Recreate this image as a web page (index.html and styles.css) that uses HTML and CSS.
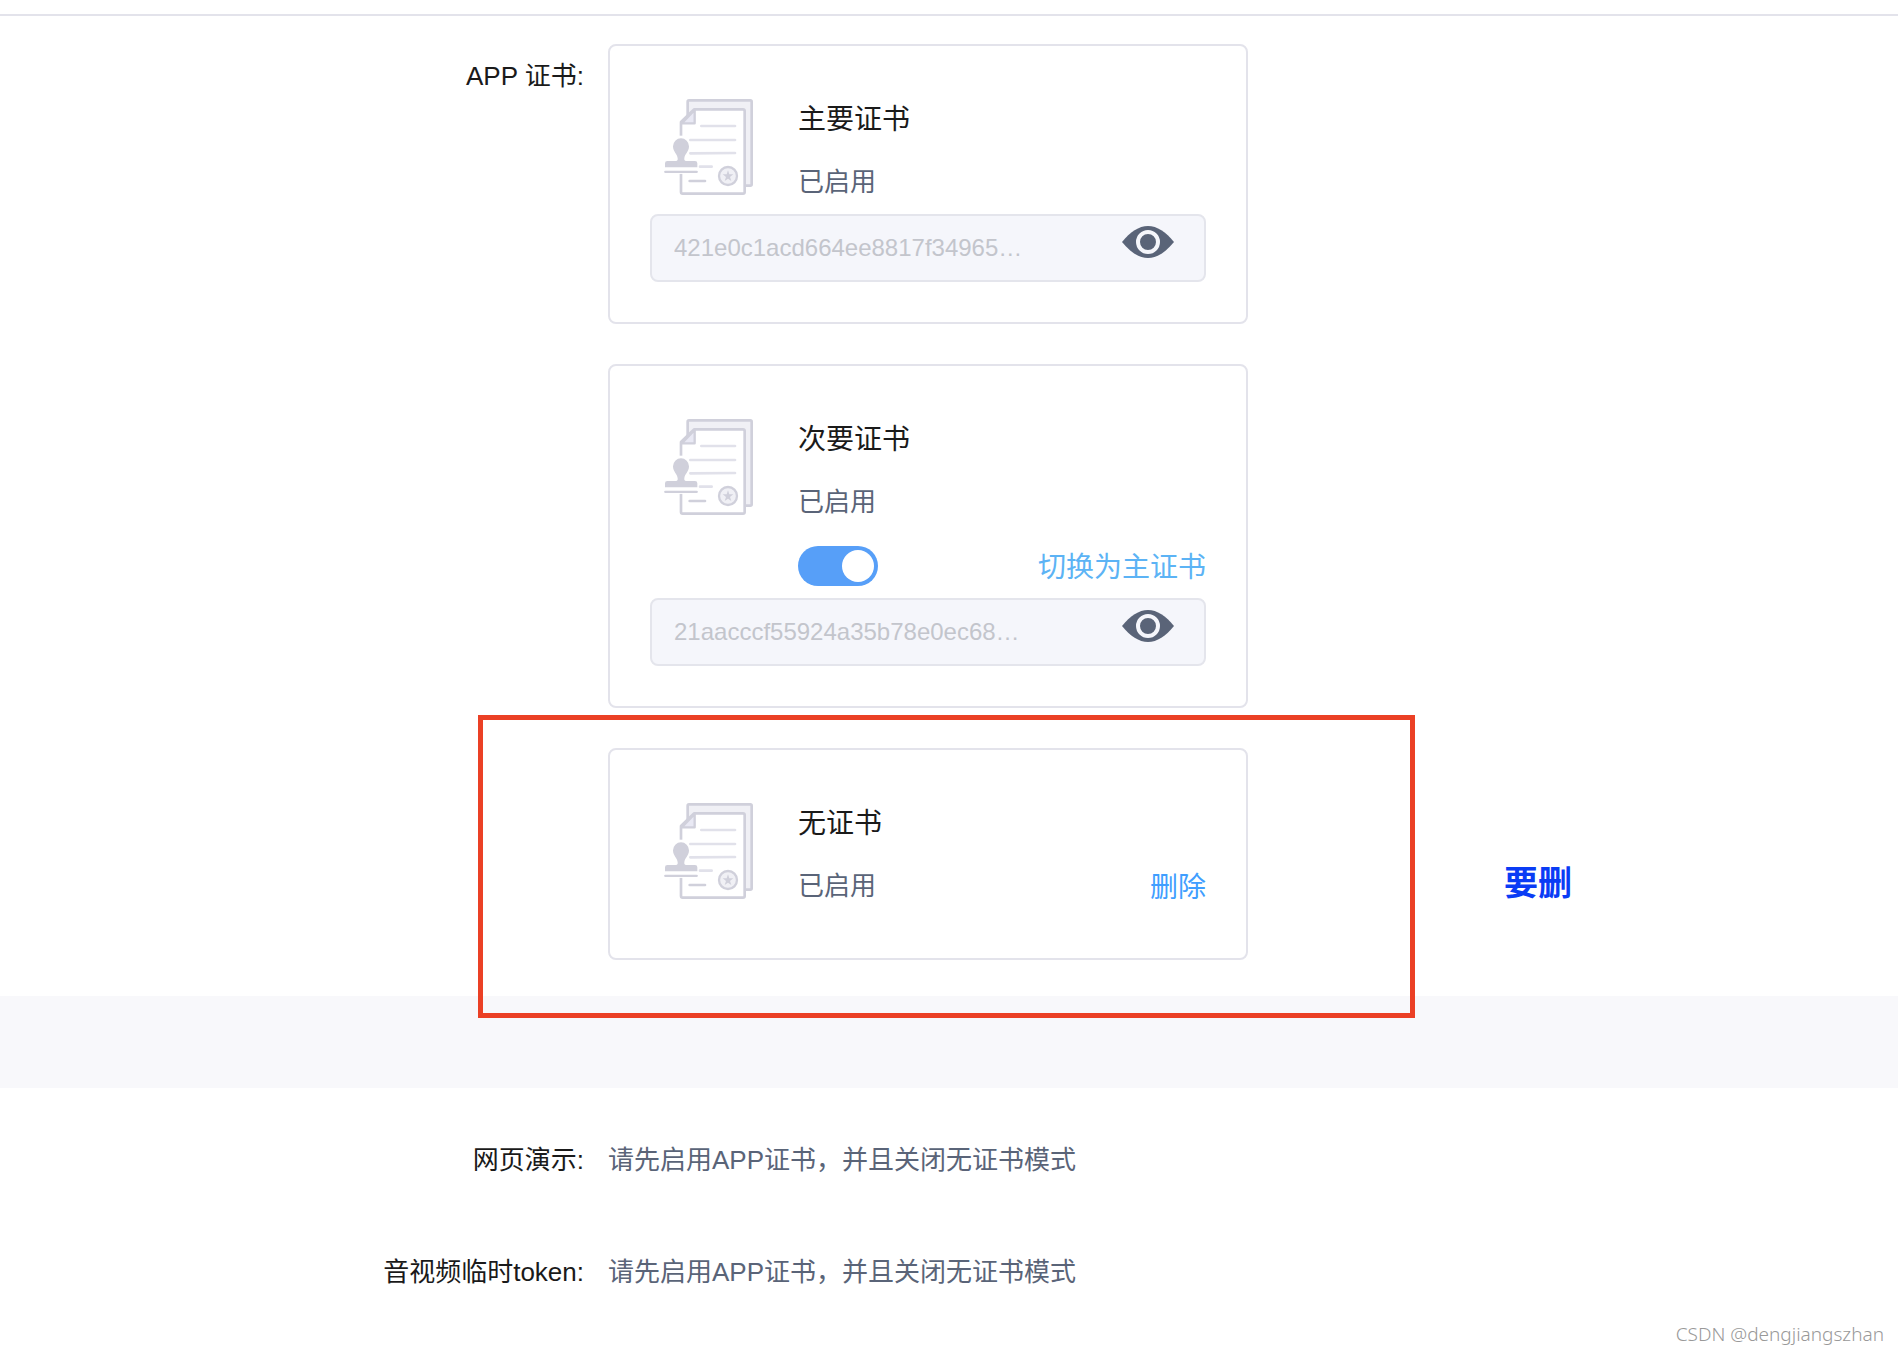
FILE: index.html
```html
<!DOCTYPE html>
<html lang="zh-CN">
<head>
  <meta charset="UTF-8">
  <meta name="viewport" content="width=device-width, initial-scale=1.0">
  <title>APP 证书</title>
  <link rel="stylesheet" href="styles.css">
</head>
<body>
  <!-- shared icons -->
  <svg class="sprite" aria-hidden="true">
    <symbol id="icon-cert" viewBox="72 54 270 294">
      <rect x="143" y="61" width="192" height="256" rx="4" fill="#f0f0f5" stroke="#d0d0db" stroke-width="8"/>
      <path d="M123 126L162 88H309a5 5 0 0 1 5 5V336a5 5 0 0 1-5 5H128a5 5 0 0 1-5-5z" fill="#fff" stroke="#d0d0db" stroke-width="8" stroke-linejoin="round"/>
      <path d="M125 130L164 90V130z" fill="#e9e9f4" stroke="#d0d0db" stroke-width="7" stroke-linejoin="round"/>
      <path d="M184 138H285M151 180H285M151 220L285 219M180 260H215" fill="none" stroke="#e1e1ea" stroke-width="8" stroke-linecap="round"/>
      <path d="M149 303H195" stroke="#d0d0db" stroke-width="8" stroke-linecap="round"/>
      <path d="M116 167h14v114h-14z" fill="#fff"/>
      <path d="M72 262H176V281H72z" fill="#fff"/>
      <path d="M75 262V250q0-7 7-7H108q6 0 5-8c-1-14-14-19-14-36a24 24 0 0 1 48 0c0 17-13 22-14 36q-1 8 5 8H165q7 0 7 7V262z" fill="#d0d0db"/>
      <path d="M76 275.500H170" stroke="#d0d0db" stroke-width="7" stroke-linecap="round"/>
      <circle cx="264" cy="288" r="27" fill="#f0f0f5" stroke="#d0d0db" stroke-width="7"/>
      <path d="M264 271l4 12h12l-10 8 4 12-10-7-10 7 4-12-10-8h12z" fill="#d0d0db"/>
    </symbol>
    <symbol id="icon-eye" viewBox="0 0 52 32">
      <path d="M0 16C8 6 17 0 26 0S44 6 52 16C44 26 35 32 26 32S8 26 0 16z" fill="#5a6478"/>
      <circle cx="26" cy="16" r="10" fill="#5a6478" stroke="#f5f6fb" stroke-width="4"/>
    </symbol>
  </svg>

  <main>
    <section class="section section-cert">
      <div class="form-row">
        <div class="form-label">APP 证书:</div>
        <div class="cert-list">
          <div class="cert-card">
            <svg class="cert-icon"><use href="#icon-cert"/></svg>
            <h3>主要证书</h3>
            <p>已启用</p>
            <div class="cert-key">
              <input type="text" aria-label="主要证书" value="421e0c1acd664ee8817f34965…" disabled>
              <button type="button" class="eye-btn" aria-label="查看"><svg><use href="#icon-eye"/></svg></button>
            </div>
          </div>

          <div class="cert-card">
            <svg class="cert-icon"><use href="#icon-cert"/></svg>
            <h3>次要证书</h3>
            <p>已启用</p>
            <div class="cert-actions">
              <input type="checkbox" class="switch" aria-label="启用次要证书" checked>
              <a href="#" class="switch-link">切换为主证书</a>
            </div>
            <div class="cert-key">
              <input type="text" aria-label="次要证书" value="21aacccf55924a35b78e0ec68…" disabled>
              <button type="button" class="eye-btn" aria-label="查看"><svg><use href="#icon-eye"/></svg></button>
            </div>
          </div>

          <div class="cert-card">
            <svg class="cert-icon"><use href="#icon-cert"/></svg>
            <h3>无证书</h3>
            <div class="cert-status">
              <p>已启用</p>
              <a href="#" class="delete-link">删除</a>
            </div>
            <div class="mark-box"></div>
            <strong class="mark-note">要删</strong>
          </div>
        </div>
      </div>
    </section>

    <section class="section section-demo">
      <div class="form-row">
        <div class="form-label">网页演示:</div>
        <div class="form-text">请先启用APP证书，并且关闭无证书模式</div>
      </div>
      <div class="form-row">
        <div class="form-label">音视频临时token:</div>
        <div class="form-text">请先启用APP证书，并且关闭无证书模式</div>
      </div>
    </section>
  </main>

  <div class="watermark">CSDN @dengjiangszhan</div>
</body>
</html>
```
FILE: styles.css
```css
* {
  box-sizing: border-box;
}

body {
  margin: 0;
  min-height: 100vh;
  position: relative;
  font-family: "Liberation Sans", "Noto Sans CJK SC", sans-serif;
  font-size: 26px;
  line-height: 64px;
  color: #1a1a1a;
  background: #fff;
}

main {
  padding-top: 14px;
}

.sprite {
  position: absolute;
  width: 0;
  height: 0;
}

.section-cert {
  border-top: 2px solid #e3e3eb;
  padding: 28px 0 36px;
}

.section-demo {
  border-top: 92px solid #f8f8fb;
  padding: 40px 0 48px;
}

.section-demo .form-row + .form-row {
  margin-top: 48px;
}

.form-row {
  display: flex;
}

.form-label {
  flex: 0 0 608px;
  padding-right: 24px;
  text-align: right;
}

.form-text {
  color: #5a6478;
}

.cert-list {
  flex: 0 1 640px;
  display: flex;
  flex-direction: column;
  gap: 40px;
}

/* certificate card */
.cert-card {
  display: grid;
  grid-template-columns: 148px 1fr;
  grid-auto-rows: minmax(64px, auto);
  position: relative;
  padding: 40px;
  border: 2px solid #e3e3eb;
  border-radius: 8px;
}

.cert-icon {
  grid-row: 1 / span 2;
  width: 90px;
  height: 98px;
  margin: 12px 14px;
}

.cert-card h3 {
  grid-column: 2;
  margin: 0;
  padding-top: 4px;
  font-size: 28px;
  font-weight: 400;
  line-height: 60px;
}

.cert-card p {
  grid-column: 2;
  margin: 0;
  color: #5a6478;
}

.cert-status,
.cert-actions {
  grid-column: 2;
  display: flex;
  justify-content: space-between;
  align-items: center;
}

.cert-card a {
  padding-top: 4px;
  font-size: 28px;
  line-height: 60px;
  text-decoration: none;
}

.switch-link {
  color: #5cb3f5;
}

.delete-link {
  color: #409eff;
}

.cert-key {
  grid-column: 1 / -1;
  display: flex;
  height: 68px;
  padding: 0 30px 0 22px;
  border: 2px solid #e4e5ec;
  border-radius: 8px;
  background: #f5f6fb;
}

.cert-key input {
  flex: 1;
  min-width: 0;
  padding: 0;
  border: none;
  background: none;
  font-family: inherit;
  font-size: 24px;
  color: #c3c5cc;
}

.eye-btn {
  align-self: flex-start;
  margin-top: 10px;
  padding: 0;
  border: none;
  background: none;
  cursor: pointer;
}

.eye-btn svg {
  display: block;
  width: 52px;
  height: 32px;
}

/* toggle */
.switch {
  appearance: none;
  width: 80px;
  height: 40px;
  margin: 0;
  padding: 4px;
  border-radius: 20px;
  background: #c3c5cc;
  cursor: pointer;
}

.switch::before {
  content: "";
  display: block;
  width: 32px;
  height: 32px;
  border-radius: 50%;
  background: #fff;
}

.switch:checked {
  background: #579ff8;
}

.switch:checked::before {
  margin-left: auto;
}

/* review marks drawn over the last card */
.mark-box {
  position: absolute;
  top: -35px;
  right: -169px;
  bottom: -60px;
  left: -132px;
  border: 5px solid #eb4025;
  pointer-events: none;
}

.mark-note {
  position: absolute;
  top: 101px;
  left: 894px;
  font-size: 34px;
  white-space: nowrap;
  color: #0a3cf5;
}

.watermark {
  position: absolute;
  right: 14px;
  bottom: 8px;
  font-family: "Noto Sans", sans-serif;
  font-size: 19px;
  font-weight: 300;
  line-height: 24px;
  color: #999;
}
```
